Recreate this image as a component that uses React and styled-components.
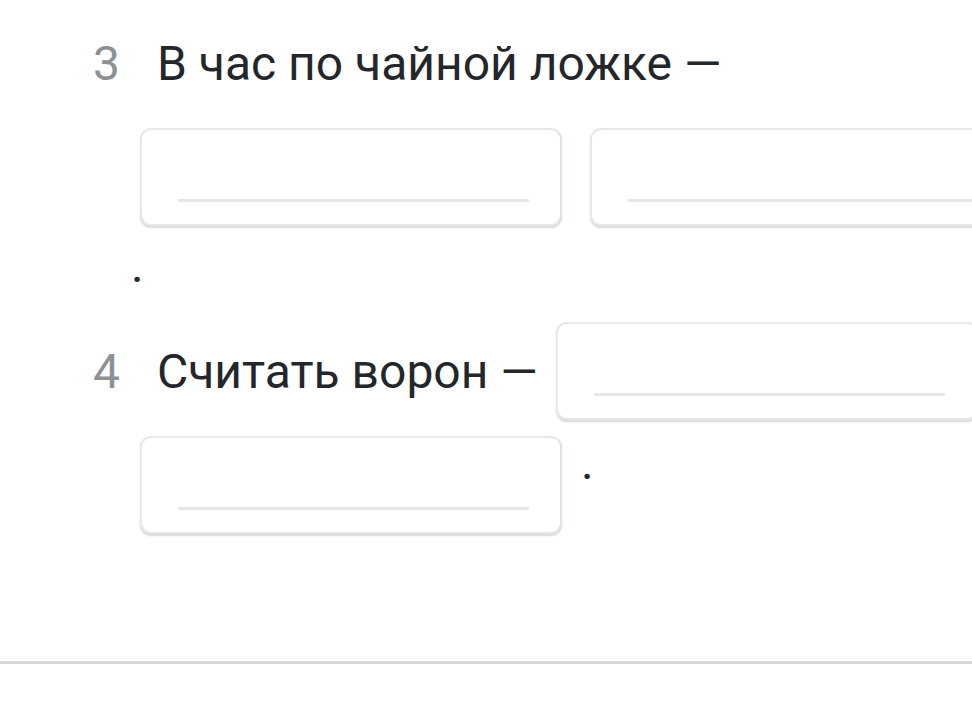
import styled, { createGlobalStyle } from "styled-components";

const GlobalStyle = createGlobalStyle`
  html, body {
    margin: 0;
    padding: 0;
    background: #ffffff;
    overflow: hidden;
  }
  body {
    font-family: Roboto, "Noto Sans", sans-serif;
    color: #23272b;
  }
`;

const items = [
  {
    num: 3,
    text: "В час по чайной ложке —",
    blanks: 2,
  },
  {
    num: 4,
    text: "Считать ворон —",
    blanks: 2,
    raisedDot: true,
  },
];

const App = () => {
  return (
    <Page>
      <GlobalStyle />
      <List>
        {items.map((item) => (
          <Item key={item.num}>
            <Num>{item.num}</Num>
            <Content>
              <Text>{item.text}</Text>
              {Array.from({ length: item.blanks }).map((_, i) => (
                <Blank key={i}>
                  <Underline />
                </Blank>
              ))}
              <Dot $raised={item.raisedDot}>.</Dot>
            </Content>
          </Item>
        ))}
      </List>
      <Divider />
    </Page>
  );
};

const Page = styled.div`
  position: relative;
  width: 972px;
  height: 717px;
  overflow: hidden;
  padding-top: 6px;
  box-sizing: border-box;
`;

const List = styled.div`
  display: flex;
  flex-direction: column;
  gap: 21px;
`;

const Item = styled.div`
  display: flex;
  align-items: flex-start;
  padding-left: 93px;
`;

const Num = styled.div`
  flex: 0 0 33px;
  height: 114px;
  display: flex;
  align-items: center;
  font-size: 48px;
  color: #8e9194;
`;

const Content = styled.div`
  flex: 0 0 909px;
  display: flex;
  flex-wrap: wrap;
  align-items: center;
  font-size: 48px;
  line-height: 55px;
`;

const Text = styled.span`
  min-height: 114px;
  display: flex;
  align-items: center;
  padding: 0 4px 0 31px;
  white-space: nowrap;
`;

const Blank = styled.div`
  box-sizing: border-box;
  width: 422px;
  height: 98px;
  margin: 8px 14px;
  padding: 0 31px 22px 36px;
  display: flex;
  align-items: flex-end;
  background: #ffffff;
  border: 2px solid #e8e9e6;
  border-right-color: #dfe6d8;
  border-radius: 11px;
  box-shadow: 0 2px 2px rgba(0, 0, 0, 0.16);
`;

const Underline = styled.div`
  flex: 1;
  height: 3px;
  background: #e6e6e6;
`;

const Dot = styled.span`
  padding-left: 5px;
  padding-top: ${(p) => (p.$raised ? "0" : "4px")};
  align-self: ${(p) => (p.$raised ? "flex-start" : "center")};
  margin-top: ${(p) => (p.$raised ? "7px" : "0")};
`;

const Divider = styled.div`
  position: absolute;
  left: 0;
  top: 661px;
  width: 972px;
  height: 3px;
  background: #d6d6d6;
`;

export default App;
